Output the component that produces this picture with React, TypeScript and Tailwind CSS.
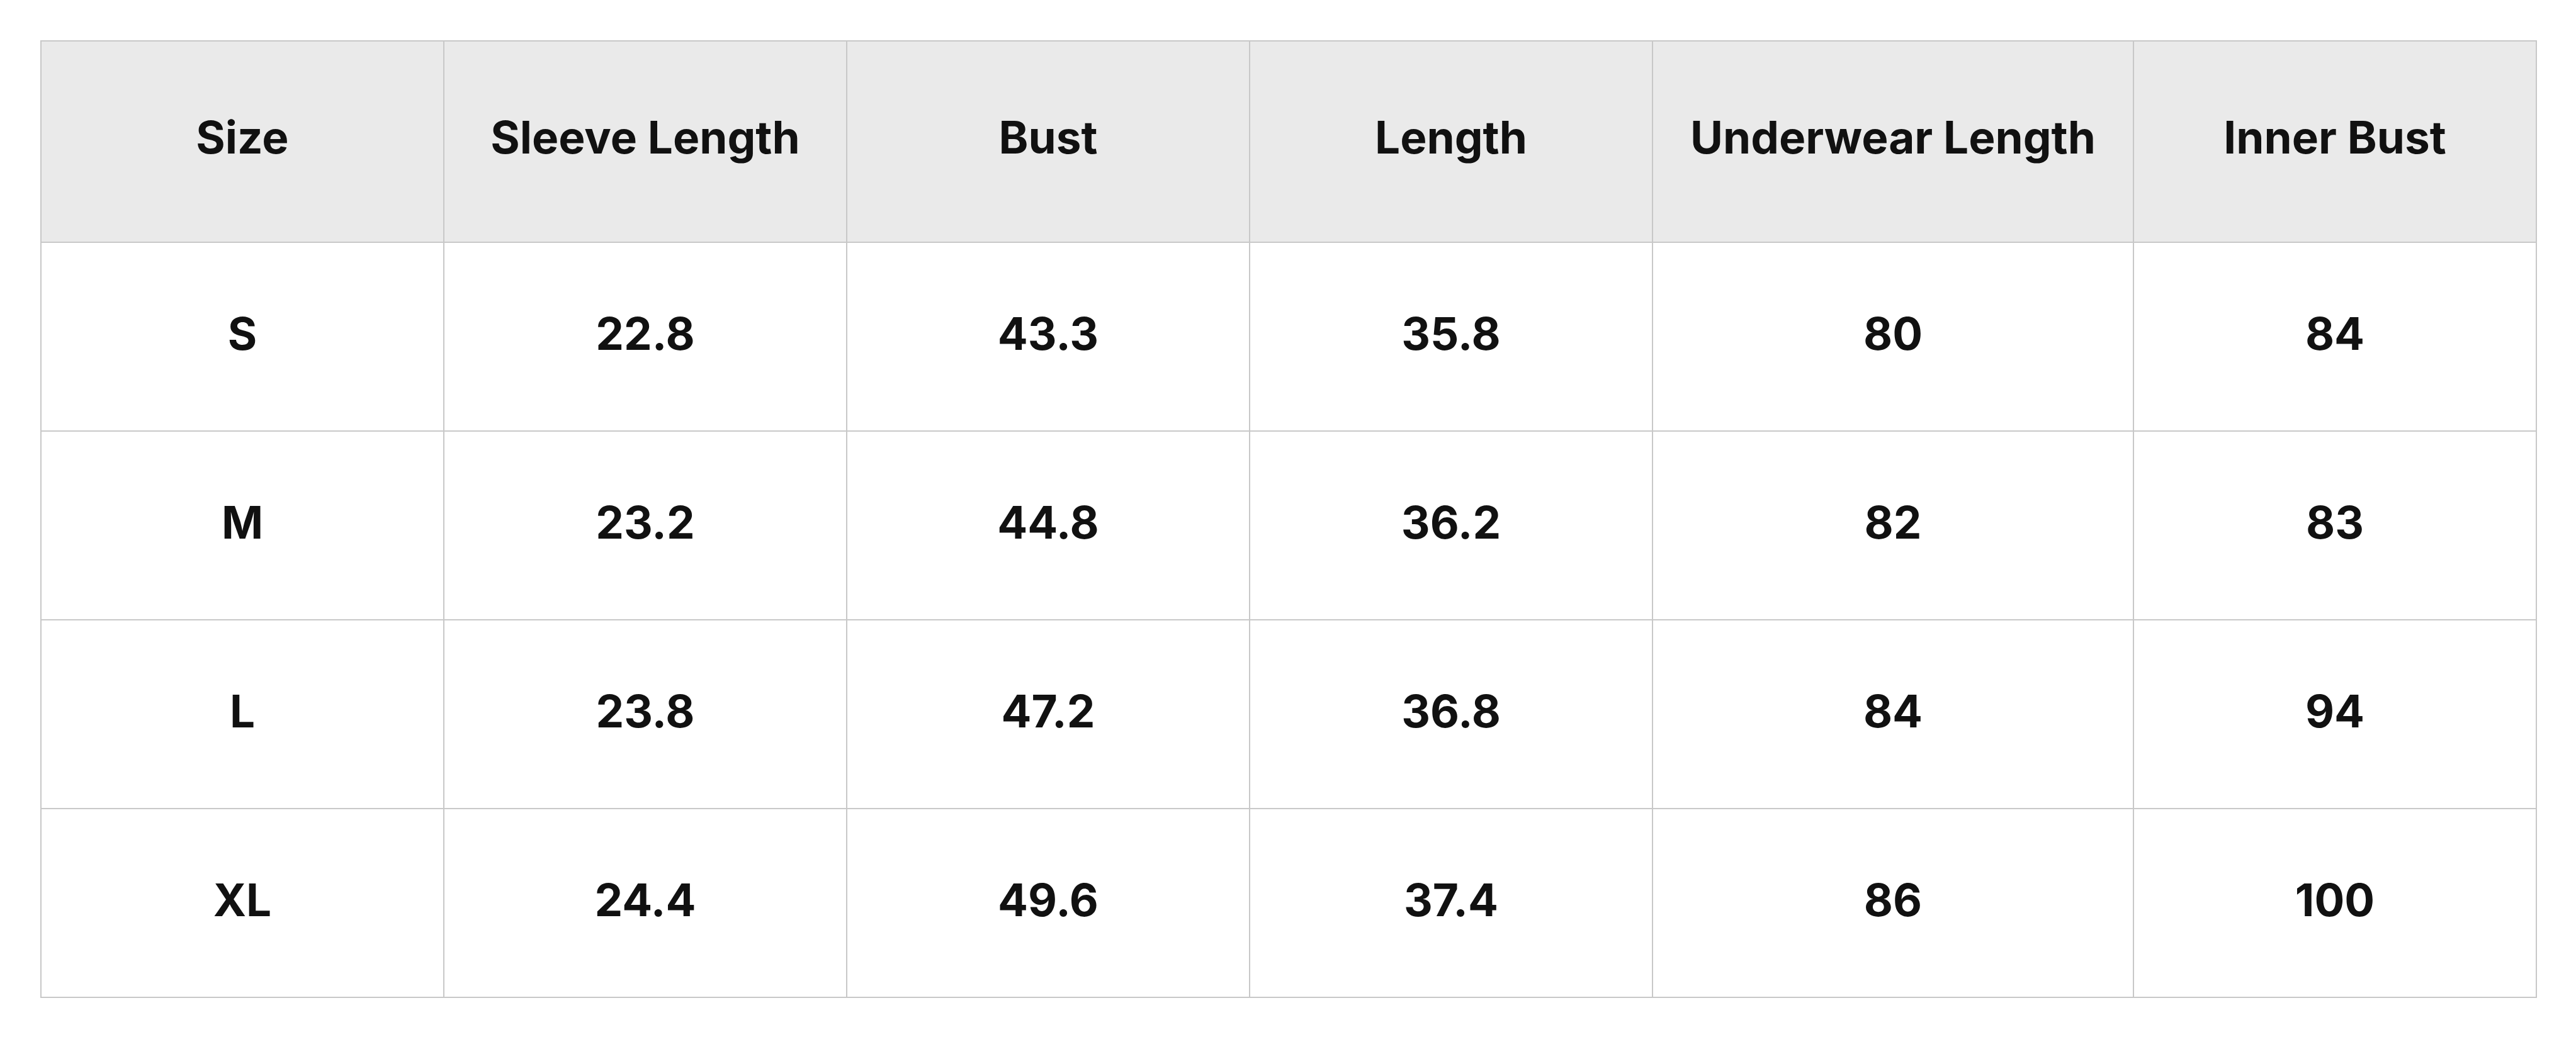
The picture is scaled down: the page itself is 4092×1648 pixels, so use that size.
import React from 'react';

const headers = ['Size', 'Sleeve Length', 'Bust', 'Length', 'Underwear Length', 'Inner Bust'];

const rows = [
    ['S', '22.8', '43.3', '35.8', '80', '84'],
    ['M', '23.2', '44.8', '36.2', '82', '83'],
    ['L', '23.8', '47.2', '36.8', '84', '94'],
    ['XL', '24.4', '49.6', '37.4', '86', '100'],
];

export default function App() {
    return (
        <div className="min-h-screen bg-white p-[64px] font-['Inter',sans-serif] text-[#111111]">
            <table className="w-[3964px] table-fixed border-collapse">
                <colgroup>
                    <col className="w-[640px]" />
                    <col className="w-[640px]" />
                    <col className="w-[640px]" />
                    <col className="w-[640px]" />
                    <col className="w-[764px]" />
                    <col className="w-[640px]" />
                </colgroup>
                <thead>
                    <tr className="h-[320px] bg-[#eaeaea]">
                        {headers.map((h) => (
                            <th key={h} className="border-2 border-[#c8c8c8] pb-[14px] text-center align-middle text-[71px] font-bold leading-none">
                                {h}
                            </th>
                        ))}
                    </tr>
                </thead>
                <tbody>
                    {rows.map((r) => (
                        <tr key={r[0]} className="h-[300px]">
                            {r.map((v, i) => (
                                <td key={i} className="border-2 border-[#c8c8c8] pb-[10px] text-center align-middle text-[71px] font-bold leading-none">
                                    {v}
                                </td>
                            ))}
                        </tr>
                    ))}
                </tbody>
            </table>
        </div>
    );
}
